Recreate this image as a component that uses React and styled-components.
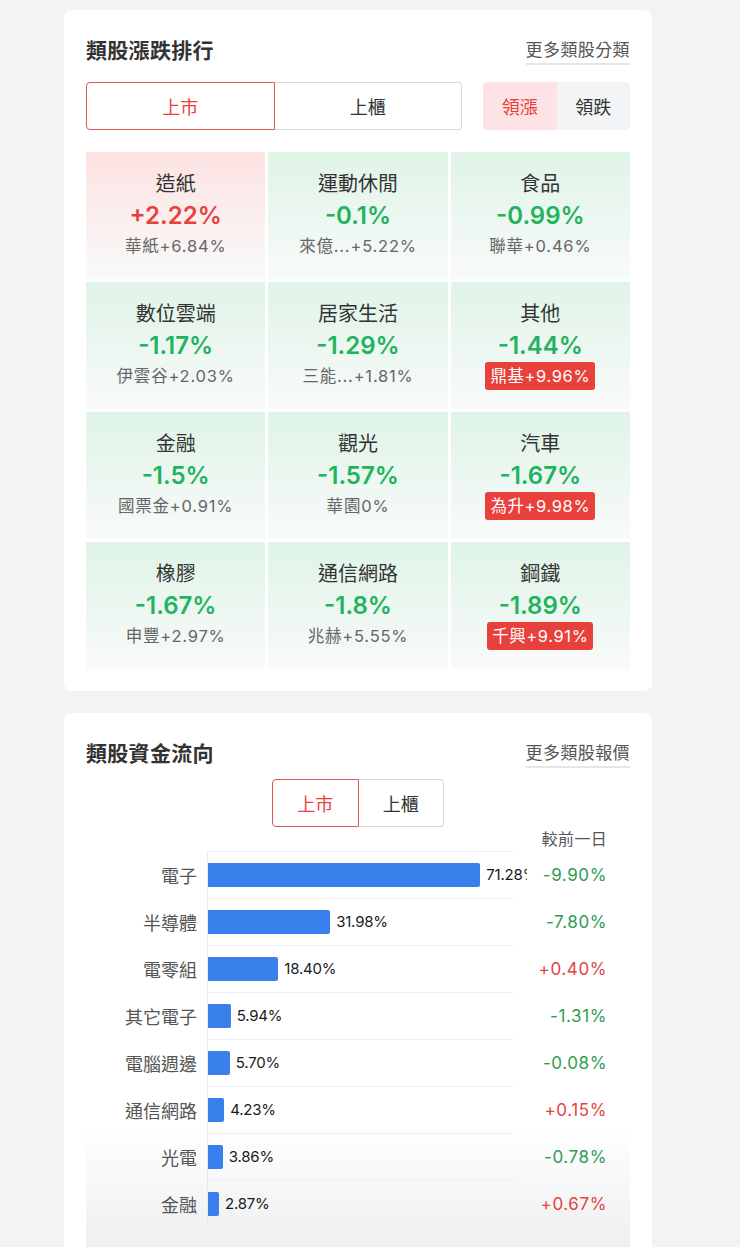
import React from "react";
import styled, { createGlobalStyle, css } from "styled-components";

const Global = createGlobalStyle`
  html, body { margin: 0; padding: 0; background: #f2f3f5; }
  body { font-family: Inter, "Noto Sans CJK TC", sans-serif; color: #333; }
  * { box-sizing: border-box; }
`;

const RED = "#e8413c";
const GREEN = "#22b35e";

const Page = styled.div`
  width: 588px;
  margin-left: 64px;
  padding-top: 10px;
  display: flex;
  flex-direction: column;
  gap: 22px;
`;

const Card = styled.section`
  background: #fff;
  border-radius: 8px;
  padding: 22px 22px 22px;
  display: flex;
  flex-direction: column;
`;

const Header = styled.div`
  height: 34px;
  display: flex;
  align-items: center;
  justify-content: space-between;
`;

const Title = styled.h2`
  margin: 0;
  font-size: 21px;
  font-weight: 700;
  color: #333;
  letter-spacing: 0.3px;
`;

const MoreLink = styled.a`
  font-size: 17px;
  color: #555;
  letter-spacing: 0.4px;
  padding-bottom: 2px;
  border-bottom: 2px solid #e4e6ea;
  margin-top: 2px;
  cursor: pointer;
`;

const ControlRow = styled.div`
  margin-top: ${(p) => (p.$center ? 10 : 16)}px;
  display: flex;
  justify-content: ${(p) => (p.$center ? "center" : "space-between")};
`;

const Segment = styled.div`
  display: flex;
  width: ${(p) => p.$width}px;
  height: 48px;
`;

const SegBtn = styled.button`
  flex: 1;
  font-family: inherit;
  font-size: 18px;
  background: #fff;
  cursor: pointer;
  border: 1px solid #d6d8dc;
  color: #333;
  &:first-child { border-radius: 4px 0 0 4px; }
  &:last-child { border-radius: 0 4px 4px 0; border-left: none; }
  ${(p) =>
    p.$active &&
    css`
      border-color: #dc5a52;
      color: ${RED};
    `}
`;

const Toggle = styled.div`
  display: flex;
  width: 147px;
  height: 48px;
  border-radius: 4px;
  overflow: hidden;
`;

const ToggleBtn = styled.button`
  flex: 1;
  border: none;
  font-family: inherit;
  font-size: 18px;
  cursor: pointer;
  background: ${(p) => (p.$active ? "#fde3e3" : "#f3f4f6")};
  color: ${(p) => (p.$active ? RED : "#333")};
`;

const Grid = styled.div`
  margin-top: 22px;
  display: grid;
  grid-template-columns: repeat(3, 1fr);
  grid-auto-rows: 127px;
  gap: 3px;
`;

const Cell = styled.div`
  display: flex;
  flex-direction: column;
  align-items: center;
  justify-content: center;
  padding-bottom: 3px;
  background: linear-gradient(
    to bottom,
    ${(p) => (p.$up ? "#fde2e2" : "#dff4e7")} 0%,
    #f9fafa 100%
  );
`;

const CellName = styled.div`
  font-size: 20px;
  color: #333;
  line-height: 30px;
`;

const CellPct = styled.div`
  font-size: 24px;
  font-weight: 600;
  line-height: 33px;
  color: ${(p) => (p.$up ? RED : GREEN)};
`;

const CellSub = styled.div`
  font-size: 16.5px;
  line-height: 28px;
  letter-spacing: 0.8px;
  color: #666;
  ${(p) =>
    p.$limit &&
    css`
      background: #e8413c;
      color: #fff;
      border-radius: 3px;
      padding: 0 5px;
      letter-spacing: 0.6px;
    `}
`;

const Chart = styled.div`
  display: flex;
  flex-direction: column;
  padding: 0 23px 22px 0;
  background: linear-gradient(
    to bottom,
    #ffffff 0%,
    #ffffff calc(100% - 125px),
    #eeeff1 100%
  );
`;

const ChangeHead = styled.div`
  align-self: flex-end;
  font-size: 16px;
  color: #555;
  line-height: 24px;
  letter-spacing: 0.3px;
`;

const ChartRow = styled.div`
  display: grid;
  grid-template-columns: 111px 320px 1fr;
  column-gap: 10px;
  height: 47px;
  align-items: center;
`;

const RowLabel = styled.div`
  font-size: 18px;
  color: #555;
  text-align: right;
`;

const Track = styled.div`
  height: 100%;
  display: flex;
  align-items: center;
  gap: 6px;
  overflow: hidden;
  white-space: nowrap;
  border-left: 1px solid #e8e9eb;
  background: linear-gradient(#efefef, #efefef) no-repeat left top / 305px 1px;
`;

const Bar = styled.div`
  height: 24px;
  flex: none;
  background: #3a80ec;
  border-radius: 0 2px 2px 0;
`;

const BarValue = styled.span`
  font-size: 15px;
  color: #1a1a1a;
  letter-spacing: -0.2px;
`;

const Change = styled.div`
  text-align: right;
  font-size: 17px;
  letter-spacing: 0.6px;
  color: ${(p) => (p.$up ? "#e0453f" : "#2f9c52")};
`;

const cells = [
  { name: "造紙", pct: "+2.22%", up: true, sub: "華紙+6.84%" },
  { name: "運動休閒", pct: "-0.1%", sub: "來億...+5.22%" },
  { name: "食品", pct: "-0.99%", sub: "聯華+0.46%" },
  { name: "數位雲端", pct: "-1.17%", sub: "伊雲谷+2.03%" },
  { name: "居家生活", pct: "-1.29%", sub: "三能...+1.81%" },
  { name: "其他", pct: "-1.44%", sub: "鼎基+9.96%", limit: true },
  { name: "金融", pct: "-1.5%", sub: "國票金+0.91%" },
  { name: "觀光", pct: "-1.57%", sub: "華園0%" },
  { name: "汽車", pct: "-1.67%", sub: "為升+9.98%", limit: true },
  { name: "橡膠", pct: "-1.67%", sub: "申豐+2.97%" },
  { name: "通信網路", pct: "-1.8%", sub: "兆赫+5.55%" },
  { name: "鋼鐵", pct: "-1.89%", sub: "千興+9.91%", limit: true },
];

const flows = [
  { name: "電子", v: 71.28, ch: "-9.90%" },
  { name: "半導體", v: 31.98, ch: "-7.80%" },
  { name: "電零組", v: 18.4, ch: "+0.40%", up: true },
  { name: "其它電子", v: 5.94, ch: "-1.31%" },
  { name: "電腦週邊", v: 5.7, ch: "-0.08%" },
  { name: "通信網路", v: 4.23, ch: "+0.15%", up: true },
  { name: "光電", v: 3.86, ch: "-0.78%" },
  { name: "金融", v: 2.87, ch: "+0.67%", up: true },
];

export default function App() {
  return (
    <>
      <Global />
      <Page>
        <Card>
          <Header>
            <Title>類股漲跌排行</Title>
            <MoreLink>更多類股分類</MoreLink>
          </Header>
          <ControlRow>
            <Segment $width={376}>
              <SegBtn $active>上市</SegBtn>
              <SegBtn>上櫃</SegBtn>
            </Segment>
            <Toggle>
              <ToggleBtn $active>領漲</ToggleBtn>
              <ToggleBtn>領跌</ToggleBtn>
            </Toggle>
          </ControlRow>
          <Grid>
            {cells.map((c) => (
              <Cell key={c.name + c.pct} $up={c.up}>
                <CellName>{c.name}</CellName>
                <CellPct $up={c.up}>{c.pct}</CellPct>
                <CellSub $limit={c.limit}>{c.sub}</CellSub>
              </Cell>
            ))}
          </Grid>
        </Card>
        <Card>
          <Header>
            <Title>類股資金流向</Title>
            <MoreLink>更多類股報價</MoreLink>
          </Header>
          <ControlRow $center>
            <Segment $width={172}>
              <SegBtn $active>上市</SegBtn>
              <SegBtn>上櫃</SegBtn>
            </Segment>
          </ControlRow>
          <Chart>
            <ChangeHead>較前一日</ChangeHead>
            {flows.map((f) => (
              <ChartRow key={f.name}>
                <RowLabel>{f.name}</RowLabel>
                <Track>
                  <Bar style={{ width: `${f.v * 3.82}px` }} />
                  <BarValue>{f.v.toFixed(2)}%</BarValue>
                </Track>
                <Change $up={f.up}>{f.ch}</Change>
              </ChartRow>
            ))}
          </Chart>
        </Card>
      </Page>
    </>
  );
}
